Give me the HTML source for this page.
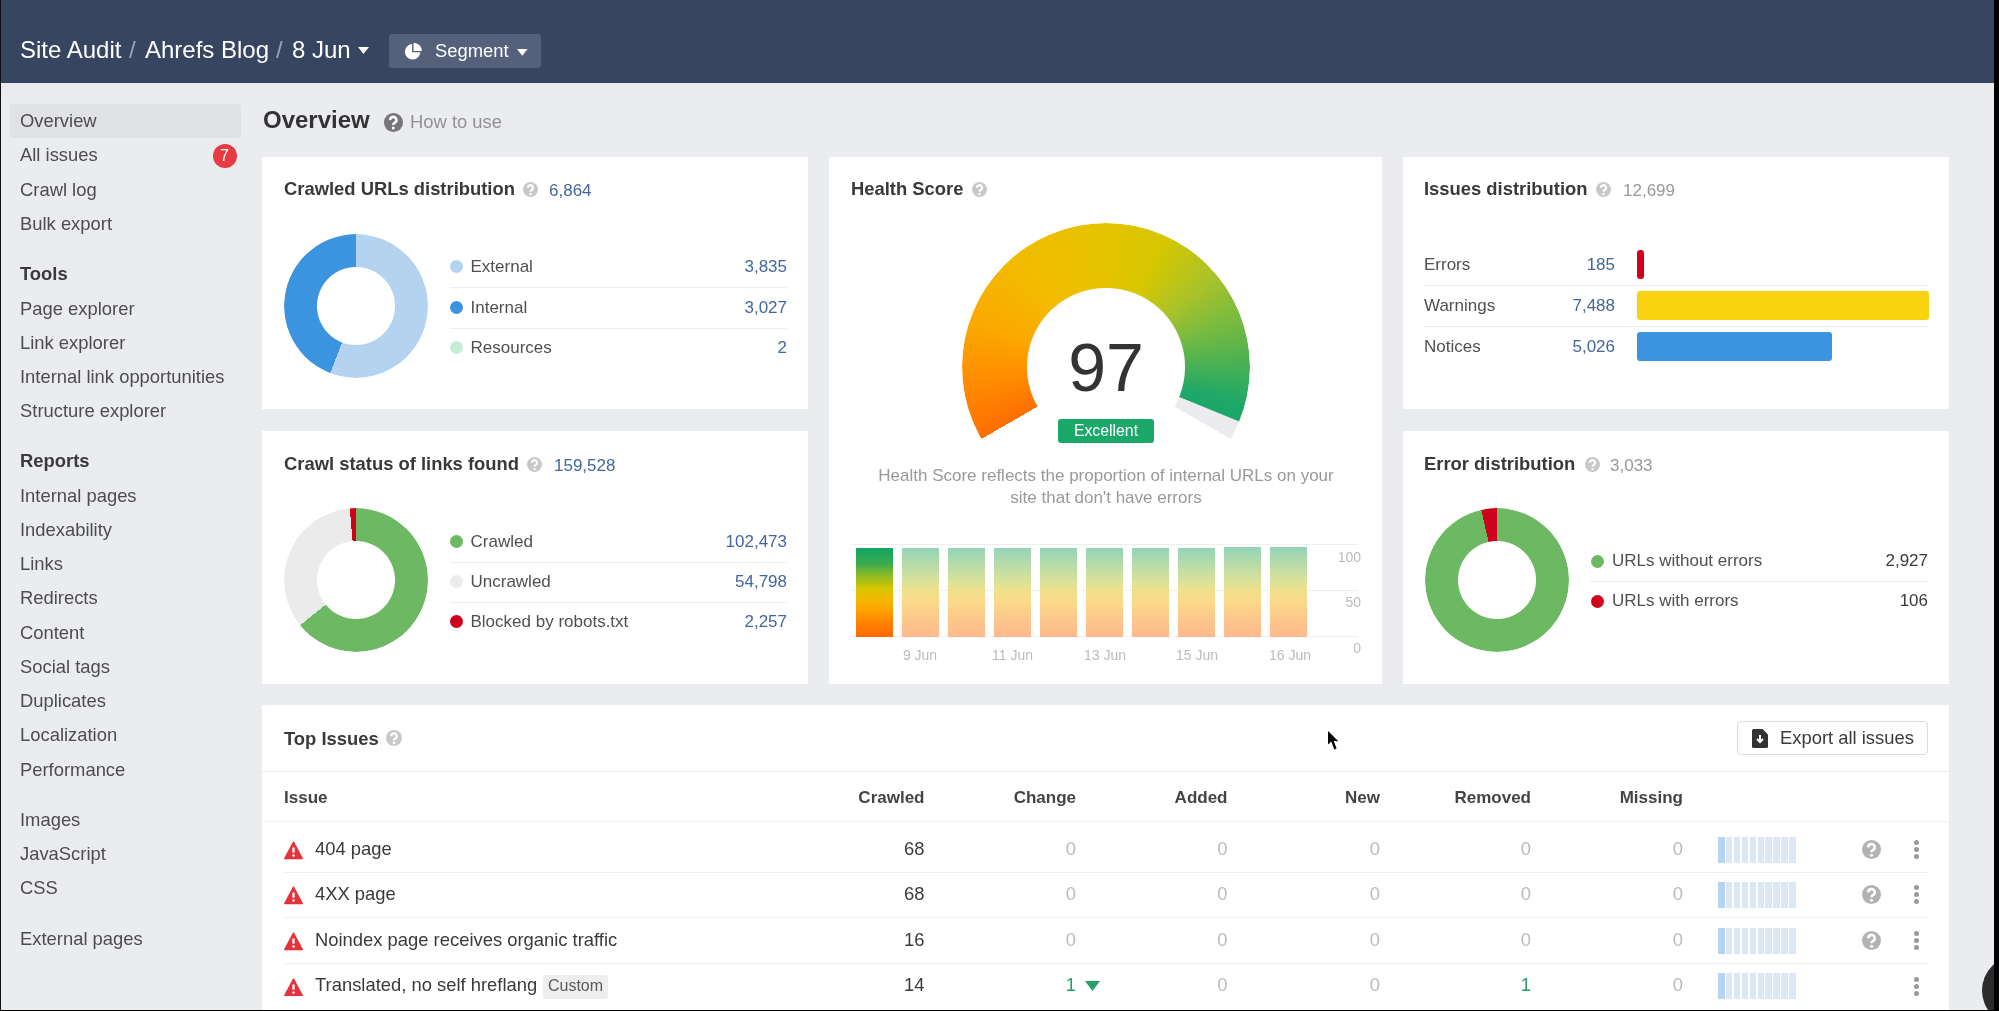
<!DOCTYPE html>
<html><head><meta charset="utf-8">
<style>
*{box-sizing:border-box;margin:0;padding:0}
html,body{width:1999px;height:1011px;overflow:hidden;background:#000}
body{font-family:"Liberation Sans",sans-serif;position:relative}
#frame{position:absolute;left:0;top:0;width:1994px;height:1010px;background:#ebecf0;overflow:hidden;opacity:0.999}
.abs{position:absolute;white-space:nowrap}
#hdr{position:absolute;left:0;top:0;width:1994px;height:82.5px;background:#374561;border-bottom:1px solid #344068}
.crumb{color:#fff;font-size:24px;top:36px;line-height:28px}
.sl{color:#9aa3b5}
#seg{position:absolute;left:389px;top:34px;width:152px;height:34px;background:#55617b;border-radius:3px}
.side{font-size:18.4px;color:#4d4d4d;left:20px;line-height:22px}
.sideh{font-weight:bold;color:#3a3a3a}
.card{position:absolute;background:#fff}
.ttl{position:absolute;white-space:nowrap;font-size:18.4px;font-weight:bold;color:#393939;line-height:22px}
.q{position:absolute;width:15px;height:15px;border-radius:50%;background:#c8c8c8}
.q svg{position:absolute;left:0;top:0;width:100%;height:100%}
.num{position:absolute;white-space:nowrap;font-size:17px;line-height:20px;color:#44669d}
.gr{color:#999}
.lg{position:absolute;white-space:nowrap;font-size:17px;color:#505050;line-height:20px}
.val{position:absolute;white-space:nowrap;font-size:17px;color:#44669d;line-height:20px;text-align:right}
.dot{position:absolute;width:13px;height:13px;border-radius:50%}
.sep{position:absolute;height:1px;background:#ededed}
.donut{position:absolute;width:144px;height:144px;border-radius:50%;-webkit-mask:radial-gradient(circle at 50% 50%,transparent 38.5px,#000 39.5px);mask:radial-gradient(circle at 50% 50%,transparent 38.5px,#000 39.5px)}
.th{position:absolute;white-space:nowrap;font-size:17px;font-weight:bold;color:#3a3a3a;line-height:20px;text-align:right}
.td{position:absolute;white-space:nowrap;font-size:18.4px;color:#bbb;line-height:22px;text-align:right}
.it{position:absolute;white-space:nowrap;font-size:18.4px;color:#3a3a3a;line-height:22px}
</style></head><body>
<div id="frame">
  <div id="hdr">
    <div class="abs crumb" style="left:20px">Site Audit</div>
    <div class="abs crumb sl" style="left:129px">/</div>
    <div class="abs crumb" style="left:145px">Ahrefs Blog</div>
    <div class="abs crumb sl" style="left:276px">/</div>
    <div class="abs crumb" style="left:292px">8 Jun</div>
    <svg class="abs" style="left:358px;top:47px" width="11" height="8" viewBox="0 0 11 8"><path d="M0 0H11L5.5 7Z" fill="#fff"/></svg>
    <div id="seg">
      <svg class="abs" style="left:15px;top:8.5px" width="18" height="18" viewBox="0 0 20 20"><path d="M9 1.2A8.6 8.6 0 1 0 18.2 10.4H9Z" fill="#fff"/><path d="M10.6 0A8.6 8.6 0 0 1 19.8 8.8H10.6Z" fill="#fff"/></svg>
      <div class="abs" style="left:46px;top:7px;font-size:18.4px;color:#fff;line-height:20px">Segment</div>
      <svg class="abs" style="left:128px;top:14.8px" width="10.5" height="7" viewBox="0 0 10.5 7"><path d="M0 0H10.5L5.25 6.8Z" fill="#fff"/></svg>
    </div>
  </div>

<div class="abs" style="left:0;top:83px;width:1994px;height:9px;background:#ebebec"></div>
<div class="abs" style="left:10px;top:104px;width:231px;height:34px;background:#e1e2e6;border-radius:3px"></div>
<div class="abs side" style="top:110px">Overview</div>
<div class="abs side" style="top:144px">All issues</div>
<div class="abs side" style="top:179px">Crawl log</div>
<div class="abs side" style="top:213px">Bulk export</div>
<div class="abs side sideh" style="top:263px">Tools</div>
<div class="abs side" style="top:298px">Page explorer</div>
<div class="abs side" style="top:332px">Link explorer</div>
<div class="abs side" style="top:366px">Internal link opportunities</div>
<div class="abs side" style="top:400px">Structure explorer</div>
<div class="abs side sideh" style="top:450px">Reports</div>
<div class="abs side" style="top:485px">Internal pages</div>
<div class="abs side" style="top:519px">Indexability</div>
<div class="abs side" style="top:553px">Links</div>
<div class="abs side" style="top:587px">Redirects</div>
<div class="abs side" style="top:622px">Content</div>
<div class="abs side" style="top:656px">Social tags</div>
<div class="abs side" style="top:690px">Duplicates</div>
<div class="abs side" style="top:724px">Localization</div>
<div class="abs side" style="top:759px">Performance</div>
<div class="abs side" style="top:809px">Images</div>
<div class="abs side" style="top:843px">JavaScript</div>
<div class="abs side" style="top:877px">CSS</div>
<div class="abs side" style="top:928px">External pages</div>
<div class="abs" style="left:212.5px;top:143.5px;width:24px;height:24px;border-radius:50%;background:#e73b44;color:#fff;font-size:16px;text-align:center;line-height:24px">7</div>
<div class="abs" style="left:263px;top:106px;font-size:24px;font-weight:bold;color:#333;line-height:28px">Overview</div>
<div class="q" style="left:384px;top:113px;width:18.5px;height:18.5px;background:#77777b"><svg viewBox="0 0 16 16"><path d="M5.3 6.2A2.7 2.7 0 1 1 9.4 8.4C8.5 8.9 8 9.4 8 10.4" stroke="#fff" stroke-width="2.2" fill="none"/><circle cx="8" cy="12.9" r="1.3" fill="#fff"/></svg></div>
<div class="abs" style="left:410px;top:111px;font-size:18.4px;color:#929292;line-height:22px">How to use</div>
<div class="card" style="left:262px;top:157px;width:546px;height:252px"></div>
<div class="card" style="left:262px;top:431px;width:546px;height:253px"></div>
<div class="card" style="left:829px;top:157px;width:553px;height:527px"></div>
<div class="card" style="left:1403px;top:157px;width:546px;height:252px"></div>
<div class="card" style="left:1403px;top:431px;width:546px;height:253px"></div>
<div class="card" style="left:262px;top:705px;width:1687px;height:320px"></div>
<div class="ttl" style="left:284px;top:178px">Crawled URLs distribution</div>
<div class="q" style="left:523px;top:182px"><svg viewBox="0 0 16 16"><path d="M5.3 6.2A2.7 2.7 0 1 1 9.4 8.4C8.5 8.9 8 9.4 8 10.4" stroke="#fff" stroke-width="2.2" fill="none"/><circle cx="8" cy="12.9" r="1.3" fill="#fff"/></svg></div>
<div class="num" style="left:549px;top:181px">6,864</div>
<div class="donut" style="left:284px;top:234px;background:conic-gradient(#b3d3f1 0deg 201deg,#3d94de 201deg 359.9deg,#c6ecd5 359.9deg)"></div>
<div class="dot" style="left:449.5px;top:260.0px;background:#b3d3f1"></div>
<div class="lg" style="left:470.5px;top:257.0px">External</div>
<div class="val" style="right:1207px;top:257.0px;color:#44669d">3,835</div>
<div class="sep" style="left:449.5px;top:287.0px;width:337.5px"></div>
<div class="dot" style="left:449.5px;top:300.5px;background:#3d94de"></div>
<div class="lg" style="left:470.5px;top:297.5px">Internal</div>
<div class="val" style="right:1207px;top:297.5px;color:#44669d">3,027</div>
<div class="sep" style="left:449.5px;top:327.5px;width:337.5px"></div>
<div class="dot" style="left:449.5px;top:340.5px;background:#c6ecd5"></div>
<div class="lg" style="left:470.5px;top:337.5px">Resources</div>
<div class="val" style="right:1207px;top:337.5px;color:#44669d">2</div>
<div class="ttl" style="left:284px;top:453px">Crawl status of links found</div>
<div class="q" style="left:527px;top:457px"><svg viewBox="0 0 16 16"><path d="M5.3 6.2A2.7 2.7 0 1 1 9.4 8.4C8.5 8.9 8 9.4 8 10.4" stroke="#fff" stroke-width="2.2" fill="none"/><circle cx="8" cy="12.9" r="1.3" fill="#fff"/></svg></div>
<div class="num" style="left:554px;top:456px">159,528</div>
<div class="donut" style="left:284px;top:508px;background:conic-gradient(#6db862 0deg 231deg,#ebebeb 231deg 355deg,#d0021b 355deg 360deg)"></div>
<div class="dot" style="left:449.5px;top:534.5px;background:#6db862"></div>
<div class="lg" style="left:470.5px;top:531.5px">Crawled</div>
<div class="val" style="right:1207px;top:531.5px;color:#44669d">102,473</div>
<div class="sep" style="left:449.5px;top:561.5px;width:337.5px"></div>
<div class="dot" style="left:449.5px;top:574.5px;background:#ebebeb"></div>
<div class="lg" style="left:470.5px;top:571.5px">Uncrawled</div>
<div class="val" style="right:1207px;top:571.5px;color:#44669d">54,798</div>
<div class="sep" style="left:449.5px;top:601.5px;width:337.5px"></div>
<div class="dot" style="left:449.5px;top:614.9px;background:#d0021b"></div>
<div class="lg" style="left:470.5px;top:611.9px">Blocked by robots.txt</div>
<div class="val" style="right:1207px;top:611.9px;color:#44669d">2,257</div>
<div class="ttl" style="left:1424px;top:178px">Issues distribution</div>
<div class="q" style="left:1596px;top:182px"><svg viewBox="0 0 16 16"><path d="M5.3 6.2A2.7 2.7 0 1 1 9.4 8.4C8.5 8.9 8 9.4 8 10.4" stroke="#fff" stroke-width="2.2" fill="none"/><circle cx="8" cy="12.9" r="1.3" fill="#fff"/></svg></div>
<div class="num gr" style="left:1623px;top:181px">12,699</div>
<div class="lg" style="left:1424px;top:254.5px">Errors</div>
<div class="val" style="right:379px;top:254.5px">185</div>
<div class="abs" style="left:1637px;top:250.0px;width:7px;height:29px;background:#d0021b;border-radius:3px"></div>
<div class="sep" style="left:1424px;top:285.0px;width:505px"></div>
<div class="lg" style="left:1424px;top:295.5px">Warnings</div>
<div class="val" style="right:379px;top:295.5px">7,488</div>
<div class="abs" style="left:1637px;top:291.0px;width:292px;height:29px;background:#f9d30f;border-radius:3px"></div>
<div class="sep" style="left:1424px;top:326.0px;width:505px"></div>
<div class="lg" style="left:1424px;top:336.5px">Notices</div>
<div class="val" style="right:379px;top:336.5px">5,026</div>
<div class="abs" style="left:1637px;top:332.0px;width:195px;height:29px;background:#3d94de;border-radius:3px"></div>
<div class="ttl" style="left:1424px;top:453px">Error distribution</div>
<div class="q" style="left:1585px;top:457px"><svg viewBox="0 0 16 16"><path d="M5.3 6.2A2.7 2.7 0 1 1 9.4 8.4C8.5 8.9 8 9.4 8 10.4" stroke="#fff" stroke-width="2.2" fill="none"/><circle cx="8" cy="12.9" r="1.3" fill="#fff"/></svg></div>
<div class="num gr" style="left:1610px;top:456px">3,033</div>
<div class="donut" style="left:1425px;top:507.5px;background:conic-gradient(#6db862 0deg 347.4deg,#d0021b 347.4deg 360deg)"></div>
<div class="dot" style="left:1590.5px;top:554.5px;background:#6db862"></div>
<div class="lg" style="left:1612px;top:551px">URLs without errors</div>
<div class="val" style="right:66px;top:551px;color:#3a3a3a">2,927</div>
<div class="sep" style="left:1590px;top:581px;width:338px"></div>
<div class="dot" style="left:1590.5px;top:594.5px;background:#d0021b"></div>
<div class="lg" style="left:1612px;top:591px">URLs with errors</div>
<div class="val" style="right:66px;top:591px;color:#3a3a3a">106</div>
<div class="ttl" style="left:851px;top:178px">Health Score</div>
<div class="q" style="left:972px;top:182px"><svg viewBox="0 0 16 16"><path d="M5.3 6.2A2.7 2.7 0 1 1 9.4 8.4C8.5 8.9 8 9.4 8 10.4" stroke="#fff" stroke-width="2.2" fill="none"/><circle cx="8" cy="12.9" r="1.3" fill="#fff"/></svg></div>
<div class="abs" style="left:962px;top:223px;width:288px;height:288px;border-radius:50%;
background:conic-gradient(from 240deg,#ff6e00 0deg,#ff8a00 22deg,#fba800 48deg,#f3bb00 78deg,#e7c300 115deg,#d5c700 145deg,#a9c22a 170deg,#6cb845 195deg,#20a867 225deg,#1aa66b 232deg,#ececef 232.5deg,#ececef 240deg,transparent 240deg);
-webkit-mask:radial-gradient(circle at 50% 50%,transparent 78.5px,#000 79.5px);mask:radial-gradient(circle at 50% 50%,transparent 78.5px,#000 79.5px)"></div>
<div class="abs" style="left:1106px;top:326.5px;transform:translateX(-50%);font-size:68px;color:#333;line-height:80px">97</div>
<div class="abs" style="left:1058px;top:419px;width:96px;height:24px;background:#1ba86a;border-radius:3px;color:#fff;font-size:15.8px;text-align:center;line-height:24px">Excellent</div>
<div class="abs" style="left:1106px;top:465px;transform:translateX(-50%);text-align:center;font-size:17px;color:#999;line-height:21.5px">Health Score reflects the proportion of internal URLs on your<br>site that don't have errors</div>
<div class="sep" style="left:851px;top:544px;width:507px;background:#eeeeee"></div>
<div class="sep" style="left:851px;top:590px;width:507px;background:#eeeeee"></div>
<div class="sep" style="left:851px;top:636px;width:507px;background:#eeeeee"></div>
<div class="abs" style="left:856px;top:547.5px;width:36.5px;height:89.10000000000002px;background:linear-gradient(#12a462 0%,#38aa4f 17%,#8dbb25 31%,#d5c600 45%,#f4b800 58%,#ffa300 70%,#ff8000 85%,#ff6800 100%)"></div>
<div class="abs" style="left:902px;top:547.5px;width:36.5px;height:89.10000000000002px;background:linear-gradient(#93d4b8 0%,#b9dca8 20%,#dbe298 38%,#f2df8a 50%,#fbd98a 62%,#fdc98b 78%,#ffb88d 100%)"></div>
<div class="abs" style="left:948px;top:548.2px;width:36.5px;height:88.39999999999998px;background:linear-gradient(#93d4b8 0%,#b9dca8 20%,#dbe298 38%,#f2df8a 50%,#fbd98a 62%,#fdc98b 78%,#ffb88d 100%)"></div>
<div class="abs" style="left:994px;top:547.5px;width:36.5px;height:89.10000000000002px;background:linear-gradient(#93d4b8 0%,#b9dca8 20%,#dbe298 38%,#f2df8a 50%,#fbd98a 62%,#fdc98b 78%,#ffb88d 100%)"></div>
<div class="abs" style="left:1040px;top:547.5px;width:36.5px;height:89.10000000000002px;background:linear-gradient(#93d4b8 0%,#b9dca8 20%,#dbe298 38%,#f2df8a 50%,#fbd98a 62%,#fdc98b 78%,#ffb88d 100%)"></div>
<div class="abs" style="left:1086px;top:547.5px;width:36.5px;height:89.10000000000002px;background:linear-gradient(#93d4b8 0%,#b9dca8 20%,#dbe298 38%,#f2df8a 50%,#fbd98a 62%,#fdc98b 78%,#ffb88d 100%)"></div>
<div class="abs" style="left:1132px;top:547.5px;width:36.5px;height:89.10000000000002px;background:linear-gradient(#93d4b8 0%,#b9dca8 20%,#dbe298 38%,#f2df8a 50%,#fbd98a 62%,#fdc98b 78%,#ffb88d 100%)"></div>
<div class="abs" style="left:1178px;top:547.5px;width:36.5px;height:89.10000000000002px;background:linear-gradient(#93d4b8 0%,#b9dca8 20%,#dbe298 38%,#f2df8a 50%,#fbd98a 62%,#fdc98b 78%,#ffb88d 100%)"></div>
<div class="abs" style="left:1224px;top:546.5px;width:36.5px;height:90.10000000000002px;background:linear-gradient(#93d4b8 0%,#b9dca8 20%,#dbe298 38%,#f2df8a 50%,#fbd98a 62%,#fdc98b 78%,#ffb88d 100%)"></div>
<div class="abs" style="left:1270px;top:546.5px;width:36.5px;height:90.10000000000002px;background:linear-gradient(#93d4b8 0%,#b9dca8 20%,#dbe298 38%,#f2df8a 50%,#fbd98a 62%,#fdc98b 78%,#ffb88d 100%)"></div>
<div class="abs" style="left:920px;top:646.5px;transform:translateX(-50%);font-size:14px;color:#bbb;line-height:16px">9 Jun</div>
<div class="abs" style="left:1012.5px;top:646.5px;transform:translateX(-50%);font-size:14px;color:#bbb;line-height:16px">11 Jun</div>
<div class="abs" style="left:1105px;top:646.5px;transform:translateX(-50%);font-size:14px;color:#bbb;line-height:16px">13 Jun</div>
<div class="abs" style="left:1197px;top:646.5px;transform:translateX(-50%);font-size:14px;color:#bbb;line-height:16px">15 Jun</div>
<div class="abs" style="left:1290px;top:646.5px;transform:translateX(-50%);font-size:14px;color:#bbb;line-height:16px">16 Jun</div>
<div class="abs" style="right:633px;top:548.5px;font-size:14px;color:#bbb;line-height:16px">100</div>
<div class="abs" style="right:633px;top:593.5px;font-size:14px;color:#bbb;line-height:16px">50</div>
<div class="abs" style="right:633px;top:639.5px;font-size:14px;color:#bbb;line-height:16px">0</div>
<div class="ttl" style="left:284px;top:727.5px">Top Issues</div>
<div class="q" style="left:386px;top:730px;width:16px;height:16px"><svg viewBox="0 0 16 16"><path d="M5.3 6.2A2.7 2.7 0 1 1 9.4 8.4C8.5 8.9 8 9.4 8 10.4" stroke="#fff" stroke-width="2.2" fill="none"/><circle cx="8" cy="12.9" r="1.3" fill="#fff"/></svg></div>
<div class="abs" style="left:1737px;top:721px;width:191px;height:34px;border:1px solid #dcdcdc;border-radius:4px;background:#fff">
<svg class="abs" style="left:14px;top:7px" width="16" height="19" viewBox="0 0 16 19"><path d="M1.5 0H10.5L16 5.5V17.5Q16 19 14.5 19H1.5Q0 19 0 17.5V1.5Q0 0 1.5 0Z" fill="#333"/><path d="M8 6V12.5M5 10L8 13L11 10" stroke="#fff" stroke-width="2" fill="none"/></svg>
<div class="abs" style="left:42px;top:5px;font-size:18.4px;color:#3a3a3a;line-height:22px">Export all issues</div></div>
<div class="sep" style="left:262px;top:771px;width:1687px;background:#eaeaea"></div>
<div class="sep" style="left:262px;top:821px;width:1687px;background:#f0f0f0"></div>
<div class="th" style="left:284px;top:788px;text-align:left;color:#444">Issue</div>
<div class="th" style="right:1069.5px;top:788px;color:#444">Crawled</div>
<div class="th" style="right:918px;top:788px;color:#444">Change</div>
<div class="th" style="right:766.5px;top:788px;color:#444">Added</div>
<div class="th" style="right:614px;top:788px;color:#444">New</div>
<div class="th" style="right:463px;top:788px;color:#444">Removed</div>
<div class="th" style="right:311px;top:788px;color:#444">Missing</div>
<svg class="abs" style="left:283.5px;top:841.0px" width="19" height="18.5" viewBox="0 0 19 18.5"><path d="M9.5 1L18.3 17.5H0.7Z" fill="#e5333b" stroke="#e5333b" stroke-width="1.4" stroke-linejoin="round"/><path d="M9.5 6.5V11.6" stroke="#fff" stroke-width="2.3"/><circle cx="9.5" cy="14.4" r="1.25" fill="#fff"/></svg>
<div class="it" style="left:315px;top:837.5px">404 page</div>
<div class="td" style="right:1069.5px;top:837.5px;color:#3a3a3a">68</div>
<div class="td" style="right:918px;top:837.5px;color:#bbb">0</div>
<div class="td" style="right:766.5px;top:837.5px;color:#bbb">0</div>
<div class="td" style="right:614px;top:837.5px;color:#bbb">0</div>
<div class="td" style="right:463px;top:837.5px;color:#bbb">0</div>
<div class="td" style="right:311px;top:837.5px;color:#bbb">0</div>
<div class="abs" style="left:1718px;top:836.5px;width:79px;height:26px"><div class="abs" style="left:0.00px;top:0;width:6.5px;height:26px;background:#b5d4f1"></div><div class="abs" style="left:7.90px;top:0;width:6.5px;height:26px;background:#d9e7f7"></div><div class="abs" style="left:15.80px;top:0;width:6.5px;height:26px;background:#d9e7f7"></div><div class="abs" style="left:23.70px;top:0;width:6.5px;height:26px;background:#d9e7f7"></div><div class="abs" style="left:31.60px;top:0;width:6.5px;height:26px;background:#d9e7f7"></div><div class="abs" style="left:39.50px;top:0;width:6.5px;height:26px;background:#d9e7f7"></div><div class="abs" style="left:47.40px;top:0;width:6.5px;height:26px;background:#d9e7f7"></div><div class="abs" style="left:55.30px;top:0;width:6.5px;height:26px;background:#d9e7f7"></div><div class="abs" style="left:63.20px;top:0;width:6.5px;height:26px;background:#d9e7f7"></div><div class="abs" style="left:71.10px;top:0;width:6.5px;height:26px;background:#d9e7f7"></div></div>
<div class="q" style="left:1862px;top:840.0px;width:19px;height:19px;background:#b3b3b3"><svg viewBox="0 0 16 16"><path d="M5.3 6.2A2.7 2.7 0 1 1 9.4 8.4C8.5 8.9 8 9.4 8 10.4" stroke="#fff" stroke-width="2.2" fill="none"/><circle cx="8" cy="12.9" r="1.3" fill="#fff"/></svg></div>
<div class="abs" style="left:1914px;top:840.0px;width:5px;height:5px;border-radius:50%;background:#9a9a9a"></div>
<div class="abs" style="left:1914px;top:847.0px;width:5px;height:5px;border-radius:50%;background:#9a9a9a"></div>
<div class="abs" style="left:1914px;top:854.0px;width:5px;height:5px;border-radius:50%;background:#9a9a9a"></div>
<div class="sep" style="left:284px;top:871.5px;width:1644px;background:#f0f0f0"></div>
<svg class="abs" style="left:283.5px;top:886.4px" width="19" height="18.5" viewBox="0 0 19 18.5"><path d="M9.5 1L18.3 17.5H0.7Z" fill="#e5333b" stroke="#e5333b" stroke-width="1.4" stroke-linejoin="round"/><path d="M9.5 6.5V11.6" stroke="#fff" stroke-width="2.3"/><circle cx="9.5" cy="14.4" r="1.25" fill="#fff"/></svg>
<div class="it" style="left:315px;top:882.9px">4XX page</div>
<div class="td" style="right:1069.5px;top:882.9px;color:#3a3a3a">68</div>
<div class="td" style="right:918px;top:882.9px;color:#bbb">0</div>
<div class="td" style="right:766.5px;top:882.9px;color:#bbb">0</div>
<div class="td" style="right:614px;top:882.9px;color:#bbb">0</div>
<div class="td" style="right:463px;top:882.9px;color:#bbb">0</div>
<div class="td" style="right:311px;top:882.9px;color:#bbb">0</div>
<div class="abs" style="left:1718px;top:881.9px;width:79px;height:26px"><div class="abs" style="left:0.00px;top:0;width:6.5px;height:26px;background:#b5d4f1"></div><div class="abs" style="left:7.90px;top:0;width:6.5px;height:26px;background:#d9e7f7"></div><div class="abs" style="left:15.80px;top:0;width:6.5px;height:26px;background:#d9e7f7"></div><div class="abs" style="left:23.70px;top:0;width:6.5px;height:26px;background:#d9e7f7"></div><div class="abs" style="left:31.60px;top:0;width:6.5px;height:26px;background:#d9e7f7"></div><div class="abs" style="left:39.50px;top:0;width:6.5px;height:26px;background:#d9e7f7"></div><div class="abs" style="left:47.40px;top:0;width:6.5px;height:26px;background:#d9e7f7"></div><div class="abs" style="left:55.30px;top:0;width:6.5px;height:26px;background:#d9e7f7"></div><div class="abs" style="left:63.20px;top:0;width:6.5px;height:26px;background:#d9e7f7"></div><div class="abs" style="left:71.10px;top:0;width:6.5px;height:26px;background:#d9e7f7"></div></div>
<div class="q" style="left:1862px;top:885.4px;width:19px;height:19px;background:#b3b3b3"><svg viewBox="0 0 16 16"><path d="M5.3 6.2A2.7 2.7 0 1 1 9.4 8.4C8.5 8.9 8 9.4 8 10.4" stroke="#fff" stroke-width="2.2" fill="none"/><circle cx="8" cy="12.9" r="1.3" fill="#fff"/></svg></div>
<div class="abs" style="left:1914px;top:885.4px;width:5px;height:5px;border-radius:50%;background:#9a9a9a"></div>
<div class="abs" style="left:1914px;top:892.4px;width:5px;height:5px;border-radius:50%;background:#9a9a9a"></div>
<div class="abs" style="left:1914px;top:899.4px;width:5px;height:5px;border-radius:50%;background:#9a9a9a"></div>
<div class="sep" style="left:284px;top:916.9px;width:1644px;background:#f0f0f0"></div>
<svg class="abs" style="left:283.5px;top:932.4px" width="19" height="18.5" viewBox="0 0 19 18.5"><path d="M9.5 1L18.3 17.5H0.7Z" fill="#e5333b" stroke="#e5333b" stroke-width="1.4" stroke-linejoin="round"/><path d="M9.5 6.5V11.6" stroke="#fff" stroke-width="2.3"/><circle cx="9.5" cy="14.4" r="1.25" fill="#fff"/></svg>
<div class="it" style="left:315px;top:928.9px">Noindex page receives organic traffic</div>
<div class="td" style="right:1069.5px;top:928.9px;color:#3a3a3a">16</div>
<div class="td" style="right:918px;top:928.9px;color:#bbb">0</div>
<div class="td" style="right:766.5px;top:928.9px;color:#bbb">0</div>
<div class="td" style="right:614px;top:928.9px;color:#bbb">0</div>
<div class="td" style="right:463px;top:928.9px;color:#bbb">0</div>
<div class="td" style="right:311px;top:928.9px;color:#bbb">0</div>
<div class="abs" style="left:1718px;top:927.9px;width:79px;height:26px"><div class="abs" style="left:0.00px;top:0;width:6.5px;height:26px;background:#b5d4f1"></div><div class="abs" style="left:7.90px;top:0;width:6.5px;height:26px;background:#d9e7f7"></div><div class="abs" style="left:15.80px;top:0;width:6.5px;height:26px;background:#d9e7f7"></div><div class="abs" style="left:23.70px;top:0;width:6.5px;height:26px;background:#d9e7f7"></div><div class="abs" style="left:31.60px;top:0;width:6.5px;height:26px;background:#d9e7f7"></div><div class="abs" style="left:39.50px;top:0;width:6.5px;height:26px;background:#d9e7f7"></div><div class="abs" style="left:47.40px;top:0;width:6.5px;height:26px;background:#d9e7f7"></div><div class="abs" style="left:55.30px;top:0;width:6.5px;height:26px;background:#d9e7f7"></div><div class="abs" style="left:63.20px;top:0;width:6.5px;height:26px;background:#d9e7f7"></div><div class="abs" style="left:71.10px;top:0;width:6.5px;height:26px;background:#d9e7f7"></div></div>
<div class="q" style="left:1862px;top:931.4px;width:19px;height:19px;background:#b3b3b3"><svg viewBox="0 0 16 16"><path d="M5.3 6.2A2.7 2.7 0 1 1 9.4 8.4C8.5 8.9 8 9.4 8 10.4" stroke="#fff" stroke-width="2.2" fill="none"/><circle cx="8" cy="12.9" r="1.3" fill="#fff"/></svg></div>
<div class="abs" style="left:1914px;top:931.4px;width:5px;height:5px;border-radius:50%;background:#9a9a9a"></div>
<div class="abs" style="left:1914px;top:938.4px;width:5px;height:5px;border-radius:50%;background:#9a9a9a"></div>
<div class="abs" style="left:1914px;top:945.4px;width:5px;height:5px;border-radius:50%;background:#9a9a9a"></div>
<div class="sep" style="left:284px;top:962.9px;width:1644px;background:#f0f0f0"></div>
<svg class="abs" style="left:283.5px;top:977.7px" width="19" height="18.5" viewBox="0 0 19 18.5"><path d="M9.5 1L18.3 17.5H0.7Z" fill="#e5333b" stroke="#e5333b" stroke-width="1.4" stroke-linejoin="round"/><path d="M9.5 6.5V11.6" stroke="#fff" stroke-width="2.3"/><circle cx="9.5" cy="14.4" r="1.25" fill="#fff"/></svg>
<div class="it" style="left:315px;top:974.2px">Translated, no self hreflang</div>
<div class="abs" style="left:543px;top:974.7px;width:65px;height:24px;background:#eeeeee;border-radius:3px;font-size:16px;color:#5a5a5a;text-align:center;line-height:22.5px">Custom</div>
<div class="td" style="right:1069.5px;top:974.2px;color:#3a3a3a">14</div>
<div class="td" style="right:918px;top:974.2px;color:#26a269">1</div>
<div class="td" style="right:766.5px;top:974.2px;color:#bbb">0</div>
<div class="td" style="right:614px;top:974.2px;color:#bbb">0</div>
<div class="td" style="right:463px;top:974.2px;color:#26a269">1</div>
<div class="td" style="right:311px;top:974.2px;color:#bbb">0</div>
<svg class="abs" style="left:1085px;top:981.2px" width="15" height="11" viewBox="0 0 15 11"><path d="M0 0H15L7.5 10Z" fill="#26a269"/></svg>
<div class="abs" style="left:1718px;top:973.2px;width:79px;height:26px"><div class="abs" style="left:0.00px;top:0;width:6.5px;height:26px;background:#b5d4f1"></div><div class="abs" style="left:7.90px;top:0;width:6.5px;height:26px;background:#d9e7f7"></div><div class="abs" style="left:15.80px;top:0;width:6.5px;height:26px;background:#d9e7f7"></div><div class="abs" style="left:23.70px;top:0;width:6.5px;height:26px;background:#d9e7f7"></div><div class="abs" style="left:31.60px;top:0;width:6.5px;height:26px;background:#d9e7f7"></div><div class="abs" style="left:39.50px;top:0;width:6.5px;height:26px;background:#d9e7f7"></div><div class="abs" style="left:47.40px;top:0;width:6.5px;height:26px;background:#d9e7f7"></div><div class="abs" style="left:55.30px;top:0;width:6.5px;height:26px;background:#d9e7f7"></div><div class="abs" style="left:63.20px;top:0;width:6.5px;height:26px;background:#d9e7f7"></div><div class="abs" style="left:71.10px;top:0;width:6.5px;height:26px;background:#d9e7f7"></div></div>
<div class="abs" style="left:1914px;top:976.7px;width:5px;height:5px;border-radius:50%;background:#9a9a9a"></div>
<div class="abs" style="left:1914px;top:983.7px;width:5px;height:5px;border-radius:50%;background:#9a9a9a"></div>
<div class="abs" style="left:1914px;top:990.7px;width:5px;height:5px;border-radius:50%;background:#9a9a9a"></div>
<svg class="abs" style="left:1326px;top:729px" width="14" height="22" viewBox="0 0 14 22"><path d="M2 2V15.6L5.3 12.6L8.3 20.4L10.6 19.4L7.7 11.9L12.3 12.2Z" fill="#000"/></svg>
<div class="abs" style="left:1981.5px;top:955.5px;width:69px;height:69px;border-radius:50%;background:#2b2b2d"></div>
<div class="abs" style="left:0;top:0;width:1px;height:1011px;background:#111"></div>
</div></body></html>
